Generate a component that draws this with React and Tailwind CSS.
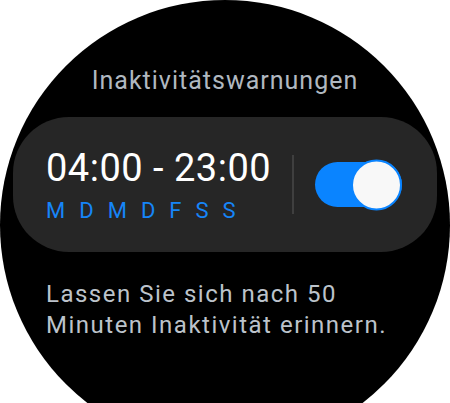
import React from 'react';

const days = ['M', 'D', 'M', 'D', 'F', 'S', 'S'];

export default function App() {
  return (
    <div className="w-[450px] h-[403px] overflow-hidden bg-white font-['Roboto',_sans-serif]">
      <div className="w-[450px] h-[450px] rounded-full bg-black flex flex-col pt-[67px]">
        {/* Title */}
        <h1 className="text-center text-[25px] leading-[28px] tracking-[1px] text-[#b0b8c0]">
          Inaktivitätswarnungen
        </h1>

        {/* Schedule card */}
        <div className="mt-[22px] mx-[13px] h-[135px] rounded-[56px] bg-[#262626] flex items-center pl-[33px]">
          <div className="w-[246px] flex flex-col">
            <span className="text-[38px] leading-[44px] tracking-[0.5px] text-white">04:00 - 23:00</span>
            <div className="mt-[8px] flex gap-[14px] text-[22px] leading-[25px] text-[#1685f8]">
              {days.map((d, i) => (
                <span key={i}>{d}</span>
              ))}
            </div>
          </div>

          <div className="w-[2px] h-[59px] bg-[#3f3f3f]" />

          {/* Toggle */}
          <div className="ml-[21px] relative w-[87px] h-[45px] rounded-full bg-[#0a84ff]">
            <div className="absolute right-0 top-1/2 -translate-y-1/2 w-[51px] h-[51px] rounded-full bg-[#f8f8f8] border-2 border-[#0a84ff]" />
          </div>
        </div>

        {/* Description */}
        <p className="mt-[27px] ml-[46px] text-[24px] leading-[31px] tracking-[1.5px] text-[#bcc3cb]">
          Lassen Sie sich nach 50
          <br />
          Minuten Inaktivität erinnern.
        </p>
      </div>
    </div>
  );
}
